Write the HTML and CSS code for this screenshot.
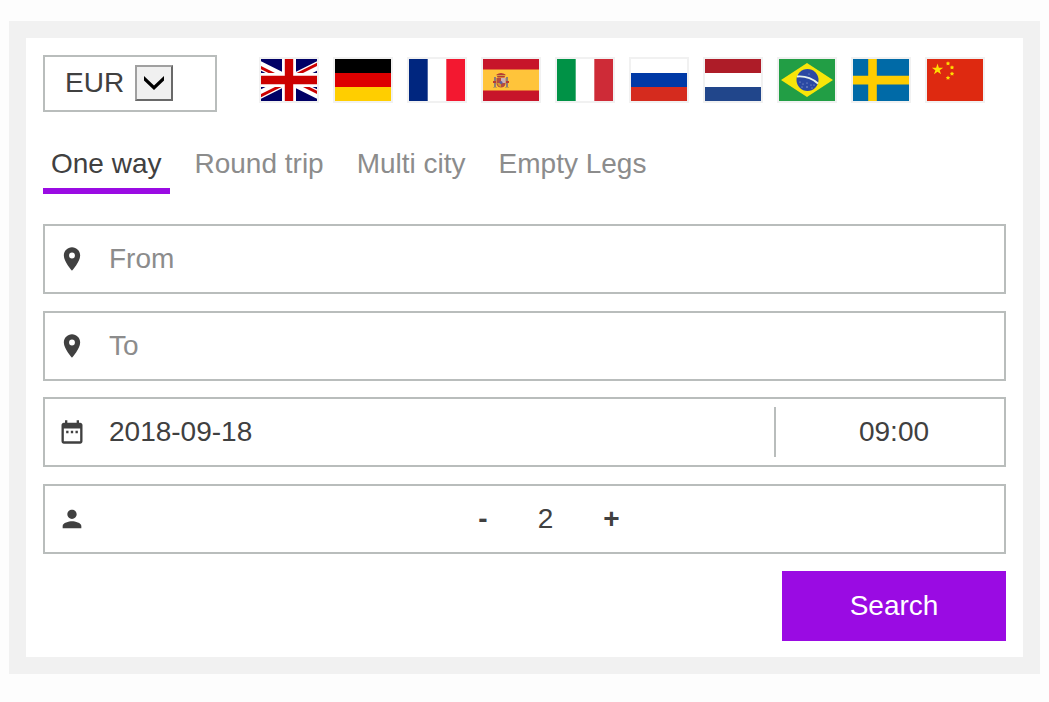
FILE: index.html
```html
<!DOCTYPE html>
<html lang="en">
<head>
<meta charset="utf-8">
<meta name="viewport" content="width=device-width, initial-scale=1">
<title>Flight search</title>
<link rel="stylesheet" href="styles.css">
</head>
<body>
<form class="widget">
  <header class="topbar">
    <div class="currency">
      <select class="currency-select" aria-label="Currency">
        <option>EUR</option>
        <option>USD</option>
        <option>GBP</option>
      </select>
      <svg class="currency-arrow" viewBox="0 0 34 32" aria-hidden="true"><path d="M7 9l10 9.500 10-9.500v4.500l-10 9.500-10-9.500z"/></svg>
    </div>
    <nav class="languages" aria-label="Language">
      <a class="flag" href="#en" aria-label="English">
        <svg viewBox="10 0 40 30">
          <clipPath id="saltire"><path d="M30 15h30v15zv15H0zH0V0zV0h30z"/></clipPath>
          <path fill="#006" d="M0 0h60v30H0z"/>
          <path stroke="#fff" stroke-width="6" d="M0 0l60 30M60 0L0 30"/>
          <path clip-path="url(#saltire)" stroke="#c00" stroke-width="4" d="M0 0l60 30M60 0L0 30"/>
          <path stroke="#fff" stroke-width="10" d="M30 0v30M0 15h60"/>
          <path stroke="#c00" stroke-width="6" d="M30 0v30M0 15h60"/>
        </svg>
      </a>
      <a class="flag" href="#de" aria-label="Deutsch">
        <svg viewBox="0 0 56 42"><path d="M0 0h56v14H0z"/><path fill="#d00" d="M0 14h56v14H0z"/><path fill="#ffce00" d="M0 28h56v14H0z"/></svg>
      </a>
      <a class="flag" href="#fr" aria-label="Français">
        <svg viewBox="0 0 56 42"><path fill="#fff" d="M0 0h56v42H0z"/><path fill="#00267f" d="M0 0h18.700v42H0z"/><path fill="#f31830" d="M37.300 0H56v42H37.300z"/></svg>
      </a>
      <a class="flag" href="#es" aria-label="Español">
        <svg viewBox="0 0 56 42">
          <path fill="#c7152a" d="M0 0h56v42H0z"/><path fill="#ffc43a" d="M0 10.500h56v21H0z"/>
          <path fill="#8d7c78" d="M11 18h2v11h-2zM23 18h2v11h-2z"/>
          <path fill="#b53b35" d="M10 22h3v2h-3zM23 22h3v2h-3zM13.500 15.500q4.500-3 9 0l-1 3h-7z"/>
          <path fill="#c9a348" d="M14 16h8v1h-8zM10 28h4v1h-4zM22 28h4v1h-4z"/>
          <path fill="#b44b40" d="M13.500 19h9v6q-1 3.500-4.500 3.500t-4.500-3.500z"/>
          <path fill="#c9b2b6" d="M18 19h4.500v5H18z"/><path fill="#d39b2e" d="M14 24h4v4q-3-1-4-4z"/>
          <circle cx="18" cy="23.500" r="1.500" fill="#5d5f9c"/>
        </svg>
      </a>
      <a class="flag" href="#it" aria-label="Italiano">
        <svg viewBox="0 0 56 42"><path fill="#fff" d="M0 0h56v42H0z"/><path fill="#009246" d="M0 0h18.700v42H0z"/><path fill="#ce2b37" d="M37.300 0H56v42H37.300z"/></svg>
      </a>
      <a class="flag" href="#ru" aria-label="Русский">
        <svg viewBox="0 0 56 42"><path fill="#fff" d="M0 0h56v14H0z"/><path fill="#0039a6" d="M0 14h56v14H0z"/><path fill="#d52b1e" d="M0 28h56v14H0z"/></svg>
      </a>
      <a class="flag" href="#nl" aria-label="Nederlands">
        <svg viewBox="0 0 56 42"><path fill="#ae1c28" d="M0 0h56v14H0z"/><path fill="#fff" d="M0 14h56v14H0z"/><path fill="#21468b" d="M0 28h56v14H0z"/></svg>
      </a>
      <a class="flag" href="#pt" aria-label="Português">
        <svg viewBox="0 0 56 42">
          <path fill="#229e45" d="M0 0h56v42H0z"/><path fill="#f8e509" d="M28 4l26 17-26 17L2 21z"/>
          <circle cx="28.500" cy="21" r="11" fill="#2b49a3"/>
          <path fill="none" stroke="#e6f3ec" stroke-width="1.800" d="M18 17.500q12-1 21 7"/>
          <g fill="#a9b9dd"><circle cx="21" cy="23" r=".6"/><circle cx="24" cy="25" r=".6"/><circle cx="23" cy="28" r=".6"/><circle cx="28" cy="24" r=".6"/><circle cx="28" cy="28" r=".7"/><circle cx="32" cy="26" r=".6"/><circle cx="35" cy="26" r=".6"/><circle cx="33" cy="29" r=".6"/><circle cx="30" cy="15" r=".6"/></g>
        </svg>
      </a>
      <a class="flag" href="#sv" aria-label="Svenska">
        <svg viewBox="0 0 56 42"><path fill="#006aa7" d="M0 0h56v42H0z"/><path fill="#fecc00" d="M0 16.800h56v8.600H0z"/><path fill="#fecc00" d="M15.200 0h8.600v42h-8.600z"/></svg>
      </a>
      <a class="flag" href="#zh" aria-label="中文">
        <svg viewBox="0 0 56 42">
          <path fill="#de2910" d="M0 0h56v42H0z"/>
          <g fill="#ffde00">
            <path id="star" d="M10.500 4.500l1.350 4.150h4.350l-3.500 2.550 1.350 4.150-3.550-2.550-3.500 2.550 1.350-4.150-3.500-2.550H9.150z"/>
            <path d="M21 2.200l.7 1.300 1.500.2-1 1.100.2 1.500-1.400-.6-1.400.6.200-1.500-1-1.100 1.500-.2z"/>
            <path d="M25 6.200l.7 1.300 1.500.2-1 1.100.2 1.500-1.400-.6-1.400.6.200-1.500-1-1.100 1.500-.2z"/>
            <path d="M25 12.400l.7 1.300 1.500.2-1 1.100.2 1.500-1.400-.6-1.400.6.200-1.500-1-1.100 1.500-.2z"/>
            <path d="M21 16.600l.7 1.300 1.500.2-1 1.100.2 1.500-1.400-.6-1.400.6.200-1.500-1-1.100 1.500-.2z"/>
          </g>
        </svg>
      </a>
    </nav>
  </header>

  <nav class="tabs" aria-label="Trip type">
    <button class="tab tab-active" type="button">One way</button>
    <button class="tab" type="button">Round trip</button>
    <button class="tab" type="button">Multi city</button>
    <button class="tab" type="button">Empty Legs</button>
  </nav>

  <div class="fields">
    <div class="places">
      <label class="field">
        <svg class="icon" viewBox="0 0 24 24" aria-hidden="true"><path d="M12 2C8.130 2 5 5.130 5 9c0 5.250 7 13 7 13s7-7.750 7-13c0-3.870-3.130-7-7-7zm0 9.500a2.500 2.500 0 0 1 0-5 2.500 2.500 0 0 1 0 5z"/></svg>
        <input class="input" type="text" placeholder="From" aria-label="From">
      </label>
      <label class="field">
        <svg class="icon" viewBox="0 0 24 24" aria-hidden="true"><path d="M12 2C8.130 2 5 5.130 5 9c0 5.250 7 13 7 13s7-7.750 7-13c0-3.870-3.130-7-7-7zm0 9.500a2.500 2.500 0 0 1 0-5 2.500 2.500 0 0 1 0 5z"/></svg>
        <input class="input" type="text" placeholder="To" aria-label="To">
      </label>
    </div>
    <div class="details">
      <div class="field">
        <svg class="icon" viewBox="0 0 24 24" aria-hidden="true"><path d="M9 11H7v2h2v-2zm4 0h-2v2h2v-2zm4 0h-2v2h2v-2zm2-7h-1V2h-2v2H8V2H6v2H5c-1.110 0-1.990.9-1.990 2L3 20c0 1.100.89 2 2 2h14c1.100 0 2-.9 2-2V6c0-1.100-.9-2-2-2zm0 16H5V9h14v11z"/></svg>
        <input class="input" type="text" value="2018-09-18" aria-label="Departure date">
        <input class="input time" type="text" value="09:00" aria-label="Departure time">
      </div>
      <div class="field passengers">
        <svg class="icon" viewBox="0 0 24 24" aria-hidden="true"><path d="M12 12c2.210 0 4-1.790 4-4s-1.790-4-4-4-4 1.790-4 4 1.790 4 4 4zm0 2c-2.670 0-8 1.340-8 4v2h16v-2c0-2.660-5.330-4-8-4z"/></svg>
        <div class="counter">
          <button class="step" type="button" aria-label="Fewer passengers">-</button>
          <output>2</output>
          <button class="step" type="button" aria-label="More passengers">+</button>
        </div>
      </div>
      <button class="search" type="submit">Search</button>
    </div>
  </div>
</form>
</body>
</html>
```
FILE: styles.css
```css
* {
  box-sizing: border-box;
}

body {
  margin: 21px 9px 28px;
  background: #fdfdfd;
  color: #404040;
  font: 28px/32px "Liberation Sans", Arial, sans-serif;
}

button,
input,
select {
  margin: 0;
  padding: 0;
  border: 0;
  border-radius: 0;
  background: none;
  color: inherit;
  font: inherit;
}

button {
  cursor: pointer;
}

.widget {
  padding: 17px 17px 16px;
  border: 17px solid #f1f1f1;
  background: #fff;
}

.topbar {
  display: flex;
  align-items: flex-start;
  gap: 42px;
}

.currency {
  position: relative;
  flex: none;
}

.currency-select {
  display: block;
  width: 174px;
  height: 57px;
  padding: 0 20px 2px;
  border: 2px solid #b9bdbc;
  appearance: none;
}

.currency-arrow {
  position: absolute;
  top: 10px;
  left: 92px;
  width: 38px;
  height: 36px;
  border: 2px solid;
  border-color: #a0a0a0 #696969 #696969 #a0a0a0;
  background: #f0f0f0;
  pointer-events: none;
}

.languages {
  display: flex;
  flex-wrap: wrap;
  gap: 14px;
  padding-top: 2px;
}

.flag {
  border: 2px solid #f1f1f1;
}

.flag svg {
  display: block;
  width: 56px;
  height: 42px;
}

.tabs {
  display: flex;
  flex-wrap: wrap;
  gap: 17px;
  margin-top: 36px;
}

.tab {
  padding: 0 8px 8px;
  border-bottom: 6px solid transparent;
  color: #8c8c8c;
}

.tab-active {
  border-color: #9a0be3;
  color: #404040;
}

.fields {
  display: grid;
  gap: 16px;
  margin-top: 30px;
}

.places,
.details {
  display: grid;
  gap: 17px;
}

.field {
  display: flex;
  align-items: center;
  gap: 23px;
  height: 70px;
  padding-left: 13px;
  border: 2px solid #b9bdbc;
}

.icon {
  flex: none;
  width: 28px;
  height: 28px;
  fill: #404040;
}

.input {
  flex: 1;
  min-width: 0;
  height: 50px;
}

.input::placeholder {
  color: #8c8c8c;
  opacity: 1;
}

.time {
  flex: 0 0 230px;
  padding-left: 8px;
  border-left: 2px solid #b9bdbc;
  text-align: center;
}

.passengers {
  gap: 8px;
}

.counter {
  display: flex;
  flex: 1;
  justify-content: center;
  gap: 50px;
}

.step {
  font-weight: bold;
}

.search {
  justify-self: end;
  width: 224px;
  height: 70px;
  background: #9a0be3;
  color: #fff;
}
```
